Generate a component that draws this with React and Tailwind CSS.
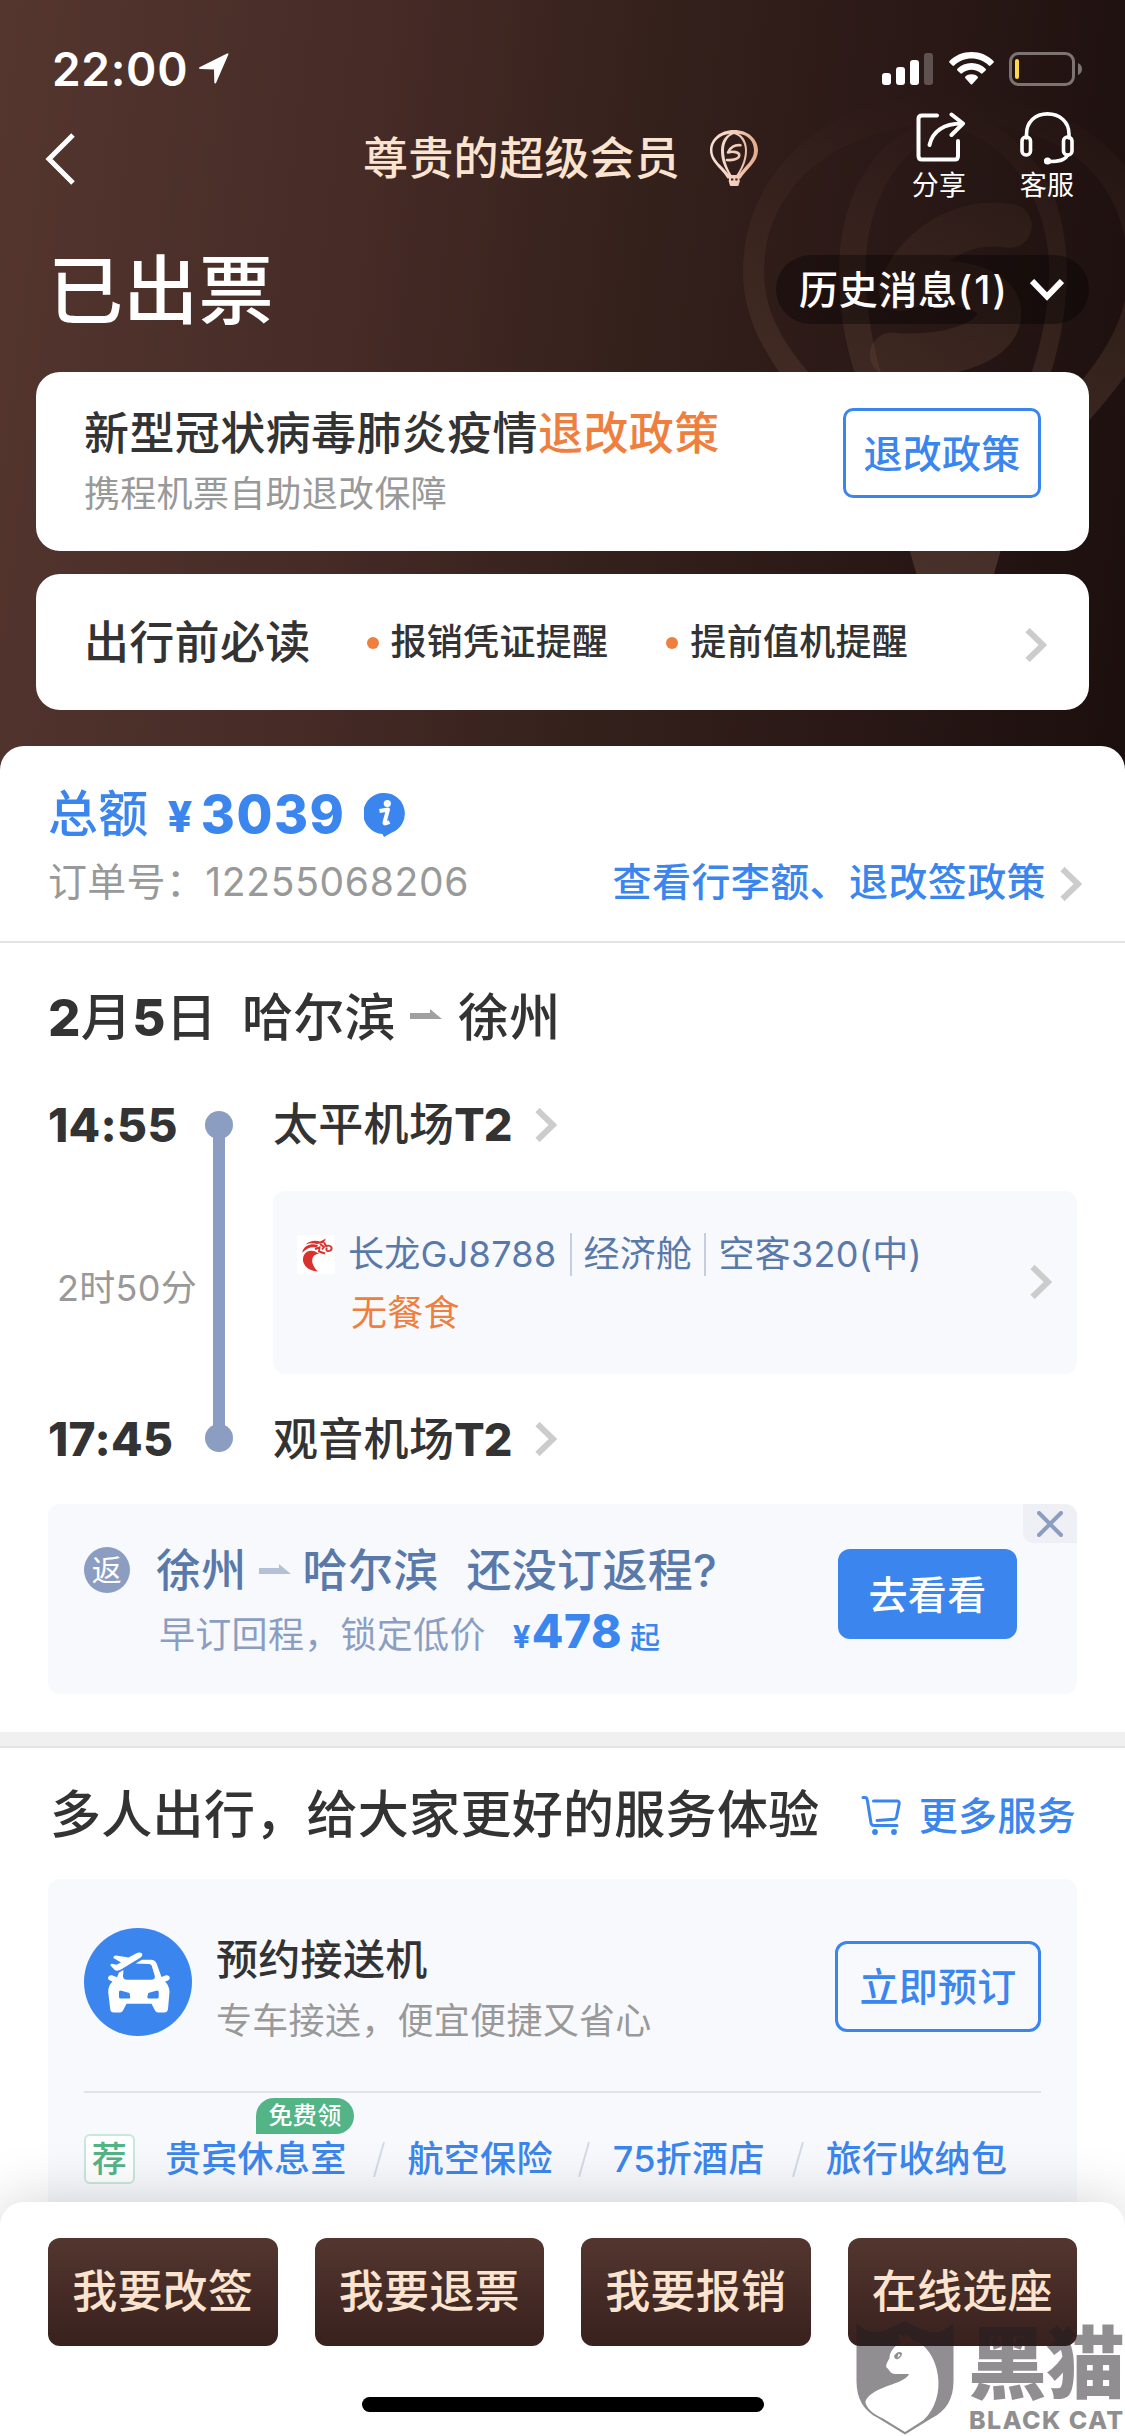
import React from "react";

function Chevron({ className = "" }) {
  return (
    <svg className={"shrink-0 " + className} width="22" height="34" viewBox="0 0 22 34" fill="none">
      <path d="M2.5 2 L18 17 L2.5 32" stroke="#cccccc" strokeWidth="6" />
    </svg>
  );
}

function HalfArrow({ color, className = "" }) {
  return (
    <svg className={"shrink-0 " + className} width="32" height="10" viewBox="0 0 32 10">
      <path d="M0 4 H20 V0 L32 10 H0 Z" fill={color} />
    </svg>
  );
}

function Balloon({ className, fill, sWidth = 2.6, id }) {
  const gold = fill === "gold";
  return (
    <svg className={className} viewBox="0 0 48 56" fill="none">
      <defs>
        <linearGradient id={id} gradientUnits="userSpaceOnUse" x1="0" y1="0" x2={gold ? "48" : "0"} y2={gold ? "0" : "56"}>
          {gold ? (
            <>
              <stop offset="0" stopColor="#fae3d6" />
              <stop offset="0.55" stopColor="#f0cdb9" />
              <stop offset="1" stopColor="#e5a888" />
            </>
          ) : (
            <>
              <stop offset="0" stopColor="#6a4a3a" stopOpacity="0" />
              <stop offset="0.4" stopColor="#6a4a3a" stopOpacity="0.22" />
              <stop offset="1" stopColor="#6a4d40" stopOpacity="0.5" />
            </>
          )}
        </linearGradient>
      </defs>
      <g fill={`url(#${id})`}>
        <path
          fillRule="evenodd"
          d="M24 0 C38 0 48 9 48 20.5 C48 32 36.500 39 30.500 48.500 H17.500 C12 39 0 32 0 20.500 C0 9 10 0 24 0 Z M20 3.800 C9.500 5 2.400 11.500 2.400 20.500 C2.400 30 12 35.500 18.500 44 C13.500 36 11 29 11 20.500 C11 13 14 6.500 20 3.800 Z M28.500 3.800 C34.500 7 37 13.500 37 20.500 C37 29 34 37 29.500 44 C35.500 35.500 44 30 44 20.500 C44 11.500 38.500 5 28.500 3.800 Z M24 4 C17.500 6 14 13 14 20.500 C14 29 17.500 39 21.500 45 H26.500 C31 39 35 29 35 20.500 C35 13 31 6 24 4 Z"
        />
        <path d="M18.500 50.500 H30 L28.700 55 Q28.500 56 27.500 56 H21 Q20 56 19.800 55 Z" />
        <path d="M19 48 h2 v3 h-2 z M23.300 48 h2 v3 h-2 z M27.500 48 h2 v3 h-2 z" />
      </g>
      <path
        d="M30.500 15.300 C25 14.500 20 17.500 18 22.500 C23 21 29.500 22 29.300 25.500 C29 29 22.500 30.500 17 30"
        stroke={`url(#${id})`}
        strokeWidth={sWidth}
        strokeLinecap="round"
        strokeLinejoin="round"
      />
    </svg>
  );
}

function StatusBar() {
  return (
    <div className="mt-[52px] flex h-[34px] items-center">
      <span className="ml-[52px] text-[46px] leading-none font-semibold tracking-[0.7px]">22:00</span>
      <svg className="ml-[10px]" width="32" height="32" viewBox="0 0 32 32">
        <path d="M30.500 1.200 L18 30 Q16.500 31.500 16.300 29 L16 16.500 L2.500 16 Q0 15.500 1.500 14.200 L29 0.600 Q31 0 30.500 1.200 Z" fill="#fff" />
      </svg>
      <div className="mr-[42px] ml-auto flex h-full items-start">
        <div className="flex h-[33px] items-end gap-[5px]">
          <i className="h-[12px] w-[9px] rounded-[3px] bg-white" />
          <i className="h-[18px] w-[9px] rounded-[3px] bg-white" />
          <i className="h-[25px] w-[9px] rounded-[3px] bg-white" />
          <i className="h-[32px] w-[9px] rounded-[3px] bg-white/25" />
        </div>
        <svg className="ml-[16px]" width="45" height="33" viewBox="0 0 45 33" fill="#fff">
          <path d="M22.500 0 C31 0 39 3.300 44.500 9 Q45.200 10 44.400 10.800 L41.500 13.600 Q40.700 14.200 39.800 13.500 C35 9 29 6.600 22.500 6.600 C16 6.600 10 9 5.200 13.500 Q4.300 14.200 3.500 13.600 L0.600 10.800 Q-0.200 10 0.500 9 C6 3.300 14 0 22.500 0 Z" />
          <path d="M22.500 11 C28 11 33 13.200 36.600 16.700 Q37.500 17.600 36.600 18.500 L33.600 21.300 Q32.800 22 31.900 21.300 C29.300 19 26 17.700 22.500 17.700 C19 17.700 15.700 19 13.100 21.300 Q12.200 22 11.400 21.300 L8.400 18.500 Q7.500 17.600 8.400 16.700 C12 13.200 17 11 22.500 11 Z" />
          <path d="M22.500 22.200 C25 22.200 27 23 28.600 24.400 Q29.500 25.400 28.600 26.300 L23.400 31.900 Q22.500 33 21.600 31.900 L16.400 26.300 Q15.500 25.400 16.400 24.400 C18 23 20 22.200 22.500 22.200 Z" />
        </svg>
        <svg className="ml-[15px]" width="74" height="34" viewBox="0 0 74 34">
          <rect x="1.500" y="1.500" width="63" height="31" rx="8" fill="none" stroke="#7d7372" strokeWidth="3" />
          <path d="M69 11 Q73 13 73 17 Q73 21 69 23 Z" fill="#7d7372" />
          <rect x="6" y="7" width="4" height="20" rx="2" fill="#ffd84a" />
        </svg>
      </div>
    </div>
  );
}

function NavBar() {
  return (
    <div className="flex h-[144px] items-center">
      <svg className="mt-[2px] ml-[45px]" width="30" height="52" viewBox="0 0 30 52" fill="none">
        <path d="M28 2 L4 26 L28 50" stroke="#fff" strokeWidth="5" />
      </svg>
      <span className="ml-[288px] w-[315px] text-[45px] leading-none font-medium whitespace-nowrap text-[#fbe4cf]">尊贵的超级会员</span>
      <Balloon id="logo" fill="gold" className="ml-[32px] h-[56px] w-[48px]" />
      <div className="mt-[26px] ml-[154px] flex w-[54px] flex-col items-center self-start">
        <svg width="54" height="54" viewBox="0 0 54 54" fill="none" stroke="#fff" strokeWidth="4" strokeLinecap="round" strokeLinejoin="round">
          <path d="M25 3.500 H10 Q6.500 3.500 6.500 7 V44 Q6.500 47.500 10 47.500 H43 Q46 47.500 46 44 V29" />
          <path d="M17.500 33 C20.500 20 31 11.500 50 11.500" />
          <path d="M39.500 2.500 L51 11.500 L39.500 23" />
        </svg>
        <span className="mt-[6px] text-[27px] leading-[28px] whitespace-nowrap">分享</span>
      </div>
      <div className="mt-[26px] ml-[54px] flex w-[54px] flex-col items-center self-start">
        <svg width="54" height="54" viewBox="0 0 54 54" fill="none" stroke="#fff" strokeWidth="3.600" strokeLinecap="round">
          <path d="M6.500 26 V22 C6.500 10 15 1.900 27.500 1.900 C40 1.900 49 10 49 22 V26" />
          <rect x="2" y="25" width="8.500" height="18" rx="4" />
          <rect x="43.500" y="25" width="8.500" height="18" rx="4" />
          <path d="M47.500 43.500 C45 48 40 49.500 29 49.500" />
          <circle cx="27.500" cy="49" r="1.800" fill="#fff" />
        </svg>
        <span className="mt-[6px] text-[27px] leading-[28px] whitespace-nowrap">客服</span>
      </div>
    </div>
  );
}

function Header() {
  return (
    <header className="relative h-[775px] overflow-hidden bg-[linear-gradient(97deg,#54362e_0%,#452a26_33%,#35211c_54%,#2b1917_74%,#1b0f0e_100%)] text-white">
      <Balloon id="mark" fill="dim" sWidth={5} className="absolute top-[92px] left-[743px] h-[490px] w-[420px]" />
      <div className="relative flex flex-col">
        <StatusBar />
        <NavBar />
        <div className="mt-[25px] flex h-[69px] items-center justify-between pr-[36px] pl-[48px]">
          <h1 className="mt-[2px] text-[75px] leading-none font-medium">已出票</h1>
          <div className="flex h-[69px] w-[313px] items-center rounded-full bg-black/35 pl-[23px]">
            <span className="text-[39px] leading-none font-medium tracking-[0.7px] whitespace-nowrap">
              历史消息<span className="tracking-[2px]">(1)</span>
            </span>
            <svg className="mr-[25px] ml-auto" width="34" height="22" viewBox="0 0 34 22" fill="none">
              <path d="M2 2 L17 17.500 L32 2" stroke="#fff" strokeWidth="6" />
            </svg>
          </div>
        </div>
        <div className="mx-[36px] mt-[48px] flex h-[179px] items-center rounded-[24px] bg-white pr-[48px] pl-[48px]">
          <div>
            <p className="text-[45px] leading-[46px] font-medium tracking-[0.4px] whitespace-nowrap text-[#333]">
              新型冠状病毒肺炎疫情<span className="text-[#ef7f3f]">退改政策</span>
            </p>
            <p className="mt-[18px] text-[36px] leading-[38px] text-[#999]">携程机票自助退改保障</p>
          </div>
          <button className="mb-[17px] ml-auto h-[90px] w-[198px] rounded-[10px] border-[3px] border-[#3b86ee] text-[39px] leading-none font-medium text-[#3b86ee]">
            退改政策
          </button>
        </div>
        <div className="mx-[36px] mt-[23px] flex h-[136px] items-center rounded-[24px] bg-white pr-[42px] pl-[48px] text-[#333]">
          <span className="text-[45px] leading-none font-medium">出行前必读</span>
          <i className="mt-[1px] ml-[56px] h-[12px] w-[12px] rounded-full bg-[#ef7f3f]" />
          <span className="ml-[12px] text-[36px] leading-none font-medium">报销凭证提醒</span>
          <i className="mt-[1px] ml-[58px] h-[12px] w-[12px] rounded-full bg-[#ef7f3f]" />
          <span className="ml-[12px] text-[36px] leading-none font-medium">提前值机提醒</span>
          <Chevron className="mt-[6px] ml-auto" />
        </div>
      </div>
    </header>
  );
}

function PriceSummary() {
  return (
    <section className="border-b-2 border-[#e3e3e3] pt-[40px] pb-[40px]">
      <div className="flex h-[54px] items-center pl-[48px] text-[#3b86ee]">
        <span className="mt-[2px] text-[50px] leading-none font-medium">总额</span>
        <span className="mt-[6px] ml-[19px] text-[43px] leading-none font-extrabold">¥</span>
        <span className="mt-[3px] ml-[8px] text-[52px] leading-none font-extrabold tracking-[1.5px]">3039</span>
        <svg className="mt-[3px] ml-[19px]" width="42" height="44" viewBox="0 0 42 44">
          <path d="M21 0 A20.500 20.500 0 0 1 28 39.500 L20 44 L18.500 41 A20.500 20.500 0 0 1 21 0 Z" fill="#3b86ee" />
          <circle cx="23.300" cy="10.500" r="3.600" fill="#fff" />
          <path d="M15.500 18 L24 16.500 L20.500 29.500 Q20 31.500 25.500 29" fill="none" stroke="#fff" strokeWidth="4" strokeLinejoin="round" />
        </svg>
      </div>
      <div className="mt-[21px] flex h-[40px] items-center pr-[43px] pl-[48px]">
        <span className="text-[39px] leading-none whitespace-nowrap text-[#999]">
          订单号：<span className="tracking-[0.7px]">12255068206</span>
        </span>
        <span className="ml-auto text-[39px] leading-none font-medium tracking-[0.4px] whitespace-nowrap text-[#3b86ee]">查看行李额、退改签政策</span>
        <Chevron className="mt-[6px] ml-[14px]" />
      </div>
    </section>
  );
}

function Airport({ name }) {
  return (
    <div className="flex h-[46px] items-center">
      <span className="text-[45px] leading-none font-medium whitespace-nowrap text-[#333]">
        {name}
        <span className="font-extrabold tracking-[-0.8px]">T2</span>
      </span>
      <Chevron className="ml-[23px]" />
    </div>
  );
}

function Dragon() {
  return (
    <svg className="shrink-0" width="38" height="39" viewBox="0 0 38 39">
      <rect width="38" height="39" fill="#fff" />
      <g fill="#d8322f">
        <path d="M21 36.500 C9.500 36 4 28 6.500 21 C9 14.500 17 14 22 19 C14.500 18.500 12 28 21 36.500 Z" />
        <path d="M5.500 16 C8 9.500 15 8 21 10 L20 12.500 C14 11.500 10 13 5.500 17.500 Z" />
        <path d="M8.500 9.500 C13 5.500 18 5 23 6.500 L29 3.500 L26.500 8 L20 9 C16 8 13 8 8.500 9.500 Z" />
      </g>
      <g fill="none" stroke="#d8322f" strokeWidth="1.900">
        <path d="M18 14 L22.500 12.500 L22 16.500 L28 18.500" />
        <path d="M23 9 L27 12 L25 14.500" />
        <path d="M27 7.500 L29 11 C34 9.500 36 13 33.500 15.500 C31 17 28 15.500 30 12.500" />
      </g>
    </svg>
  );
}

function FlightSegment() {
  return (
    <section>
      <div className="mt-[48px] flex h-[52px] items-center pl-[48px] text-[51px] leading-none font-medium whitespace-nowrap text-[#333]">
        <span>
          <span className="font-extrabold">2</span>月<span className="font-extrabold">5</span>日
        </span>
        <span className="ml-[25px]">哈尔滨</span>
        <HalfArrow color="#a0a0a0" className="mt-[-6px] ml-[14px]" />
        <span className="ml-[16px]">徐州</span>
      </div>
      <div className="mt-[59px] flex h-[360px] pr-[48px] pl-[48px] text-[#333]">
        <div className="flex w-[157px] flex-col">
          <span className="text-[46px] leading-[46px] font-extrabold">14:55</span>
          <span className="mt-[120px] pl-[9px] text-[36px] leading-[40px] whitespace-nowrap text-[#999]">2时50分</span>
          <span className="mt-[108px] text-[46px] leading-[46px] font-extrabold">17:45</span>
        </div>
        <div className="flex w-[28px] flex-col items-center pt-[9px] pb-[10px]">
          <i className="h-[28px] w-[28px] rounded-full bg-[#8b9ec1]" />
          <i className="-my-[2px] w-[12px] flex-1 bg-[#8b9ec1]" />
          <i className="h-[28px] w-[28px] rounded-full bg-[#8b9ec1]" />
        </div>
        <div className="ml-[40px] flex flex-1 flex-col">
          <Airport name="太平机场" />
          <div className="mt-[43px] flex h-[184px] items-center rounded-[12px] bg-[#f8f9fd] pr-[25px] pl-[24px]">
            <div className="mt-[2px]">
              <div className="flex h-[44px] items-center text-[36px] leading-none whitespace-nowrap text-[#5a79ab]">
                <Dragon />
                <span className="ml-[13px]">长龙GJ8788</span>
                <i className="ml-[13px] h-[43px] w-[2px] bg-[#c5cfe0]" />
                <span className="ml-[12px]">经济舱</span>
                <i className="ml-[12px] h-[43px] w-[2px] bg-[#c5cfe0]" />
                <span className="ml-[12px]">空客320(中)</span>
              </div>
              <p className="mt-[16px] pl-[54px] text-[36px] leading-[42px] text-[#ef7f3f]">无餐食</p>
            </div>
            <Chevron className="ml-auto" />
          </div>
          <div className="mt-[42px]">
            <Airport name="观音机场" />
          </div>
        </div>
      </div>
    </section>
  );
}

function ReturnOffer() {
  return (
    <section className="relative mx-[48px] mt-[42px] flex h-[190px] rounded-[12px] bg-[#f8f9fd] pr-[60px] pl-[36px]">
      <div className="pt-[43px]">
        <div className="flex h-[46px] items-center text-[45px] leading-none whitespace-nowrap text-[#5a79ab]">
          <span className="flex h-[46px] w-[46px] items-center justify-center rounded-full bg-[#8b9ec1] text-[30px] leading-none text-white">返</span>
          <span className="ml-[26px] font-medium">徐州</span>
          <HalfArrow color="#b3c0d8" className="mt-[-3px] ml-[12px]" />
          <span className="ml-[12px] font-medium">哈尔滨</span>
          <span className="ml-[28px] font-medium">还没订返程?</span>
        </div>
        <div className="mt-[20px] flex h-[44px] items-center pl-[75px] text-[36px] leading-none whitespace-nowrap text-[#8b9ec1]">
          <span>早订回程，锁定低价</span>
          <div className="mt-[-8px] ml-[27px] flex items-baseline text-[#3b86ee]">
            <span className="text-[31px] leading-none font-bold">¥</span>
            <span className="ml-px text-[46px] leading-none font-extrabold tracking-[0.6px]">478</span>
            <span className="ml-[8px] text-[30px] leading-none font-medium">起</span>
          </div>
        </div>
      </div>
      <button className="mt-[45px] ml-auto h-[90px] w-[179px] rounded-[12px] bg-[#3b86ee] text-[39px] leading-none font-medium text-white">去看看</button>
      <button className="absolute top-0 right-0 flex h-[39px] w-[54px] items-center justify-center rounded-tr-[12px] rounded-bl-[10px] bg-[#eef0f5]">
        <svg width="26" height="26" viewBox="0 0 26 26" fill="none">
          <path d="M2 2 L24 24 M24 2 L2 24" stroke="#8b9ec1" strokeWidth="4" strokeLinecap="round" />
        </svg>
      </button>
    </section>
  );
}

function Slash() {
  return (
    <svg className="shrink-0" width="12" height="35" viewBox="0 0 12 35">
      <path d="M11 0 L1 35" stroke="#d3dae8" strokeWidth="2" />
    </svg>
  );
}

function Services() {
  return (
    <section>
      <div className="mt-[36px] flex h-[60px] items-center pr-[49px] pl-[50px]">
        <h2 className="text-[51px] leading-none font-medium whitespace-nowrap text-[#333]">多人出行，给大家更好的服务体验</h2>
        <svg className="mt-[2px] ml-auto" width="40" height="41" viewBox="0 0 40 41" fill="none" stroke="#3b86ee" strokeWidth="3" strokeLinecap="round" strokeLinejoin="round">
          <path d="M2 2.500 H4 Q6 2.500 6.300 5 L10 28 Q10.500 30.500 13 30.500 H36" />
          <path d="M12.500 6 H36 Q38.500 6 38.200 8.500 L35.500 22 Q35 24 33 24.200 L16 25.500" />
          <circle cx="14" cy="37" r="2.900" fill="#3b86ee" stroke="none" />
          <circle cx="33" cy="37" r="2.900" fill="#3b86ee" stroke="none" />
        </svg>
        <span className="mt-[3px] ml-[18px] text-[39px] leading-none font-medium whitespace-nowrap text-[#3b86ee]">更多服务</span>
      </div>
      <div className="mx-[48px] mt-[35px] h-[400px] rounded-t-[12px] bg-[#f8f9fd] px-[36px] pt-[49px]">
        <div className="flex h-[108px] items-center">
          <svg className="shrink-0" width="108" height="108" viewBox="0 0 108 108">
            <circle cx="54" cy="54" r="54" fill="#3b86ee" />
            <path
              fillRule="evenodd"
              fill="#fff"
              d="M51.500 35.500 L58 31.800 H67 Q71 31.800 72.800 36 L77.500 49 L82 47.300 Q85.500 47 85.800 50 Q85.800 52 83 53 L81 53.500 Q85.500 58 85.500 64 L84 81 Q83.500 84.500 80 84.500 H74 Q72 84.500 71 82.500 L67.500 75.800 H42.500 L39 82.500 Q38 84.500 36 84.500 H30 Q26.500 84.500 26.200 81 L24.200 64 Q24 58 28.500 53.500 L26 52.600 Q23.500 51.500 24 49.500 Q25 46.800 28 47.300 L33 49.200 L35 44.500 L39.500 42 L39 48 Q39 51.800 43 51.800 H67 Q71.500 51.800 70.800 48 L67.800 38 Q67.200 36 65 36 Z M36.500 62.500 Q35 62.500 35 64 V69 Q35 70.500 36.500 70.500 H45 Q46.500 70.500 46.200 69 L45.500 65 Z M73 62.500 Q74.700 62.500 74.700 64 V69 Q74.700 70.500 73 70.500 H65 Q63 70.500 63.400 69 L64.200 65 Z"
            />
            <path fill="#fff" d="M56.500 24.700 Q59 25 58 28 Q57 29.500 50 33.500 L37 41.500 Q34 43.300 31 42.300 L26.500 37.500 Q26 36 28 35.800 L32.500 36.800 L37 34.600 L29.500 30 Q29 28 32 27.500 L44.500 29.500 L51.500 25.700 Q54.500 24.300 56.500 24.700 Z" />
          </svg>
          <div className="mt-[14px] ml-[24px]">
            <p className="text-[42px] leading-[44px] font-medium text-[#333]">预约接送机</p>
            <p className="mt-[19px] text-[36px] leading-[40px] whitespace-nowrap text-[#999]">专车接送，便宜便捷又省心</p>
          </div>
          <button className="mt-[8px] ml-auto h-[91px] w-[206px] rounded-[12px] border-[3px] border-[#3b86ee] text-[39px] leading-none font-medium text-[#3b86ee]">
            立即预订
          </button>
        </div>
        <div className="mt-[55px] h-[2px] bg-[#e2e3e6]" />
        <div className="relative mt-[41px] flex h-[50px] items-center text-[36px] leading-none font-medium whitespace-nowrap text-[#3b86ee]">
          <span className="flex h-[50px] w-[51px] items-center justify-center rounded-[6px] border-2 border-[#c9e7da] bg-white text-[35px] text-[#53b486]">荐</span>
          <span className="ml-[30px]">贵宾休息室</span>
          <span className="ml-[26px] flex">
            <Slash />
          </span>
          <span className="ml-[23px]">航空保险</span>
          <span className="ml-[25px] flex">
            <Slash />
          </span>
          <span className="ml-[23px]">75折酒店</span>
          <span className="ml-[27px] flex">
            <Slash />
          </span>
          <span className="ml-[22px]">旅行收纳包</span>
          <span className="absolute -top-[36px] left-[172px] flex h-[36px] w-[98px] items-center justify-center rounded-[18px] rounded-bl-none bg-[#53b486] text-[24px] text-white">
            免费领
          </span>
        </div>
      </div>
    </section>
  );
}

function ActionButton({ children }) {
  return (
    <button className="h-[108px] flex-1 rounded-[12px] bg-linear-to-b from-[#54362f] to-[#38211e] pb-[2px] text-[45px] leading-none font-medium whitespace-nowrap text-[#fbe4cf]">
      {children}
    </button>
  );
}

function Watermark() {
  return (
    <div className="absolute right-0 bottom-0 flex h-[116px] w-[270px] text-[#231f23] opacity-50">
      <svg className="mt-[1px] ml-[1px] shrink-0" width="98" height="114" viewBox="0 0 98 114">
        <path
          fill="currentColor"
          fillRule="evenodd"
          d="M0.500 2 Q14 16 30 9 Q42 4 49 0 Q56 4 68 9 Q84 16 97.500 2 V60 C97.500 78 90 90 76 97 L49 113.500 L22 97 C8 90 0.500 78 0.500 60 Z M42 12.500 L44.500 22 C38 25 33.500 31 33.500 37 C31.500 41 29.500 44 30.500 46.500 C34 49 34 53 39 53 L53 53 C49 61 34 63 22 69 C14 73 9 78 9.500 82 C12 90 20 94 27 97.500 L49 111 L67 99.500 C80 88 84 70 82 55 C80 37 69 22 56.500 18.500 L49 12.500 L48 15.500 Z"
        />
        <path fill="currentColor" fillRule="evenodd" d="M38 35 Q42 29 46 32 Q46 36 42 38 Q39 39 38 35 Z M42.500 32.500 L41.500 37 L44.500 34 Z" />
      </svg>
      <div className="ml-[14px] flex flex-col whitespace-nowrap">
        <span className="mt-[5px] text-[79px] leading-[78px] font-black tracking-[-1px]">黑猫</span>
        <span className="mt-[5px] ml-[1px] text-[25px] leading-[24px] font-extrabold tracking-[1.4px]">BLACK CAT</span>
      </div>
    </div>
  );
}

function BottomBar() {
  return (
    <footer className="absolute bottom-0 left-0 flex h-[234px] w-full flex-col items-center rounded-t-[24px] bg-white shadow-[0_0_60px_rgba(0,0,0,0.18)]">
      <div className="mt-[36px] flex w-full gap-[37px] px-[48px]">
        <ActionButton>我要改签</ActionButton>
        <ActionButton>我要退票</ActionButton>
        <ActionButton>我要报销</ActionButton>
        <ActionButton>在线选座</ActionButton>
      </div>
      <div className="mt-[51px] h-[15px] w-[402px] rounded-full bg-black" />
      <Watermark />
    </footer>
  );
}

export default function App() {
  return (
    <div
      lang="zh-CN"
      className="relative h-[2436px] w-[1125px] overflow-hidden bg-white font-['Inter','Noto_Sans_CJK_SC',sans-serif] tracking-[0.3px]"
    >
      <Header />
      <main className="relative -mt-[29px] rounded-t-[24px] bg-white">
        <PriceSummary />
        <FlightSegment />
        <ReturnOffer />
        <div className="mt-[38px] h-[16px] border-b-2 border-[#e3e3e3] bg-[#f0f0f0]" />
        <Services />
      </main>
      <BottomBar />
    </div>
  );
}
